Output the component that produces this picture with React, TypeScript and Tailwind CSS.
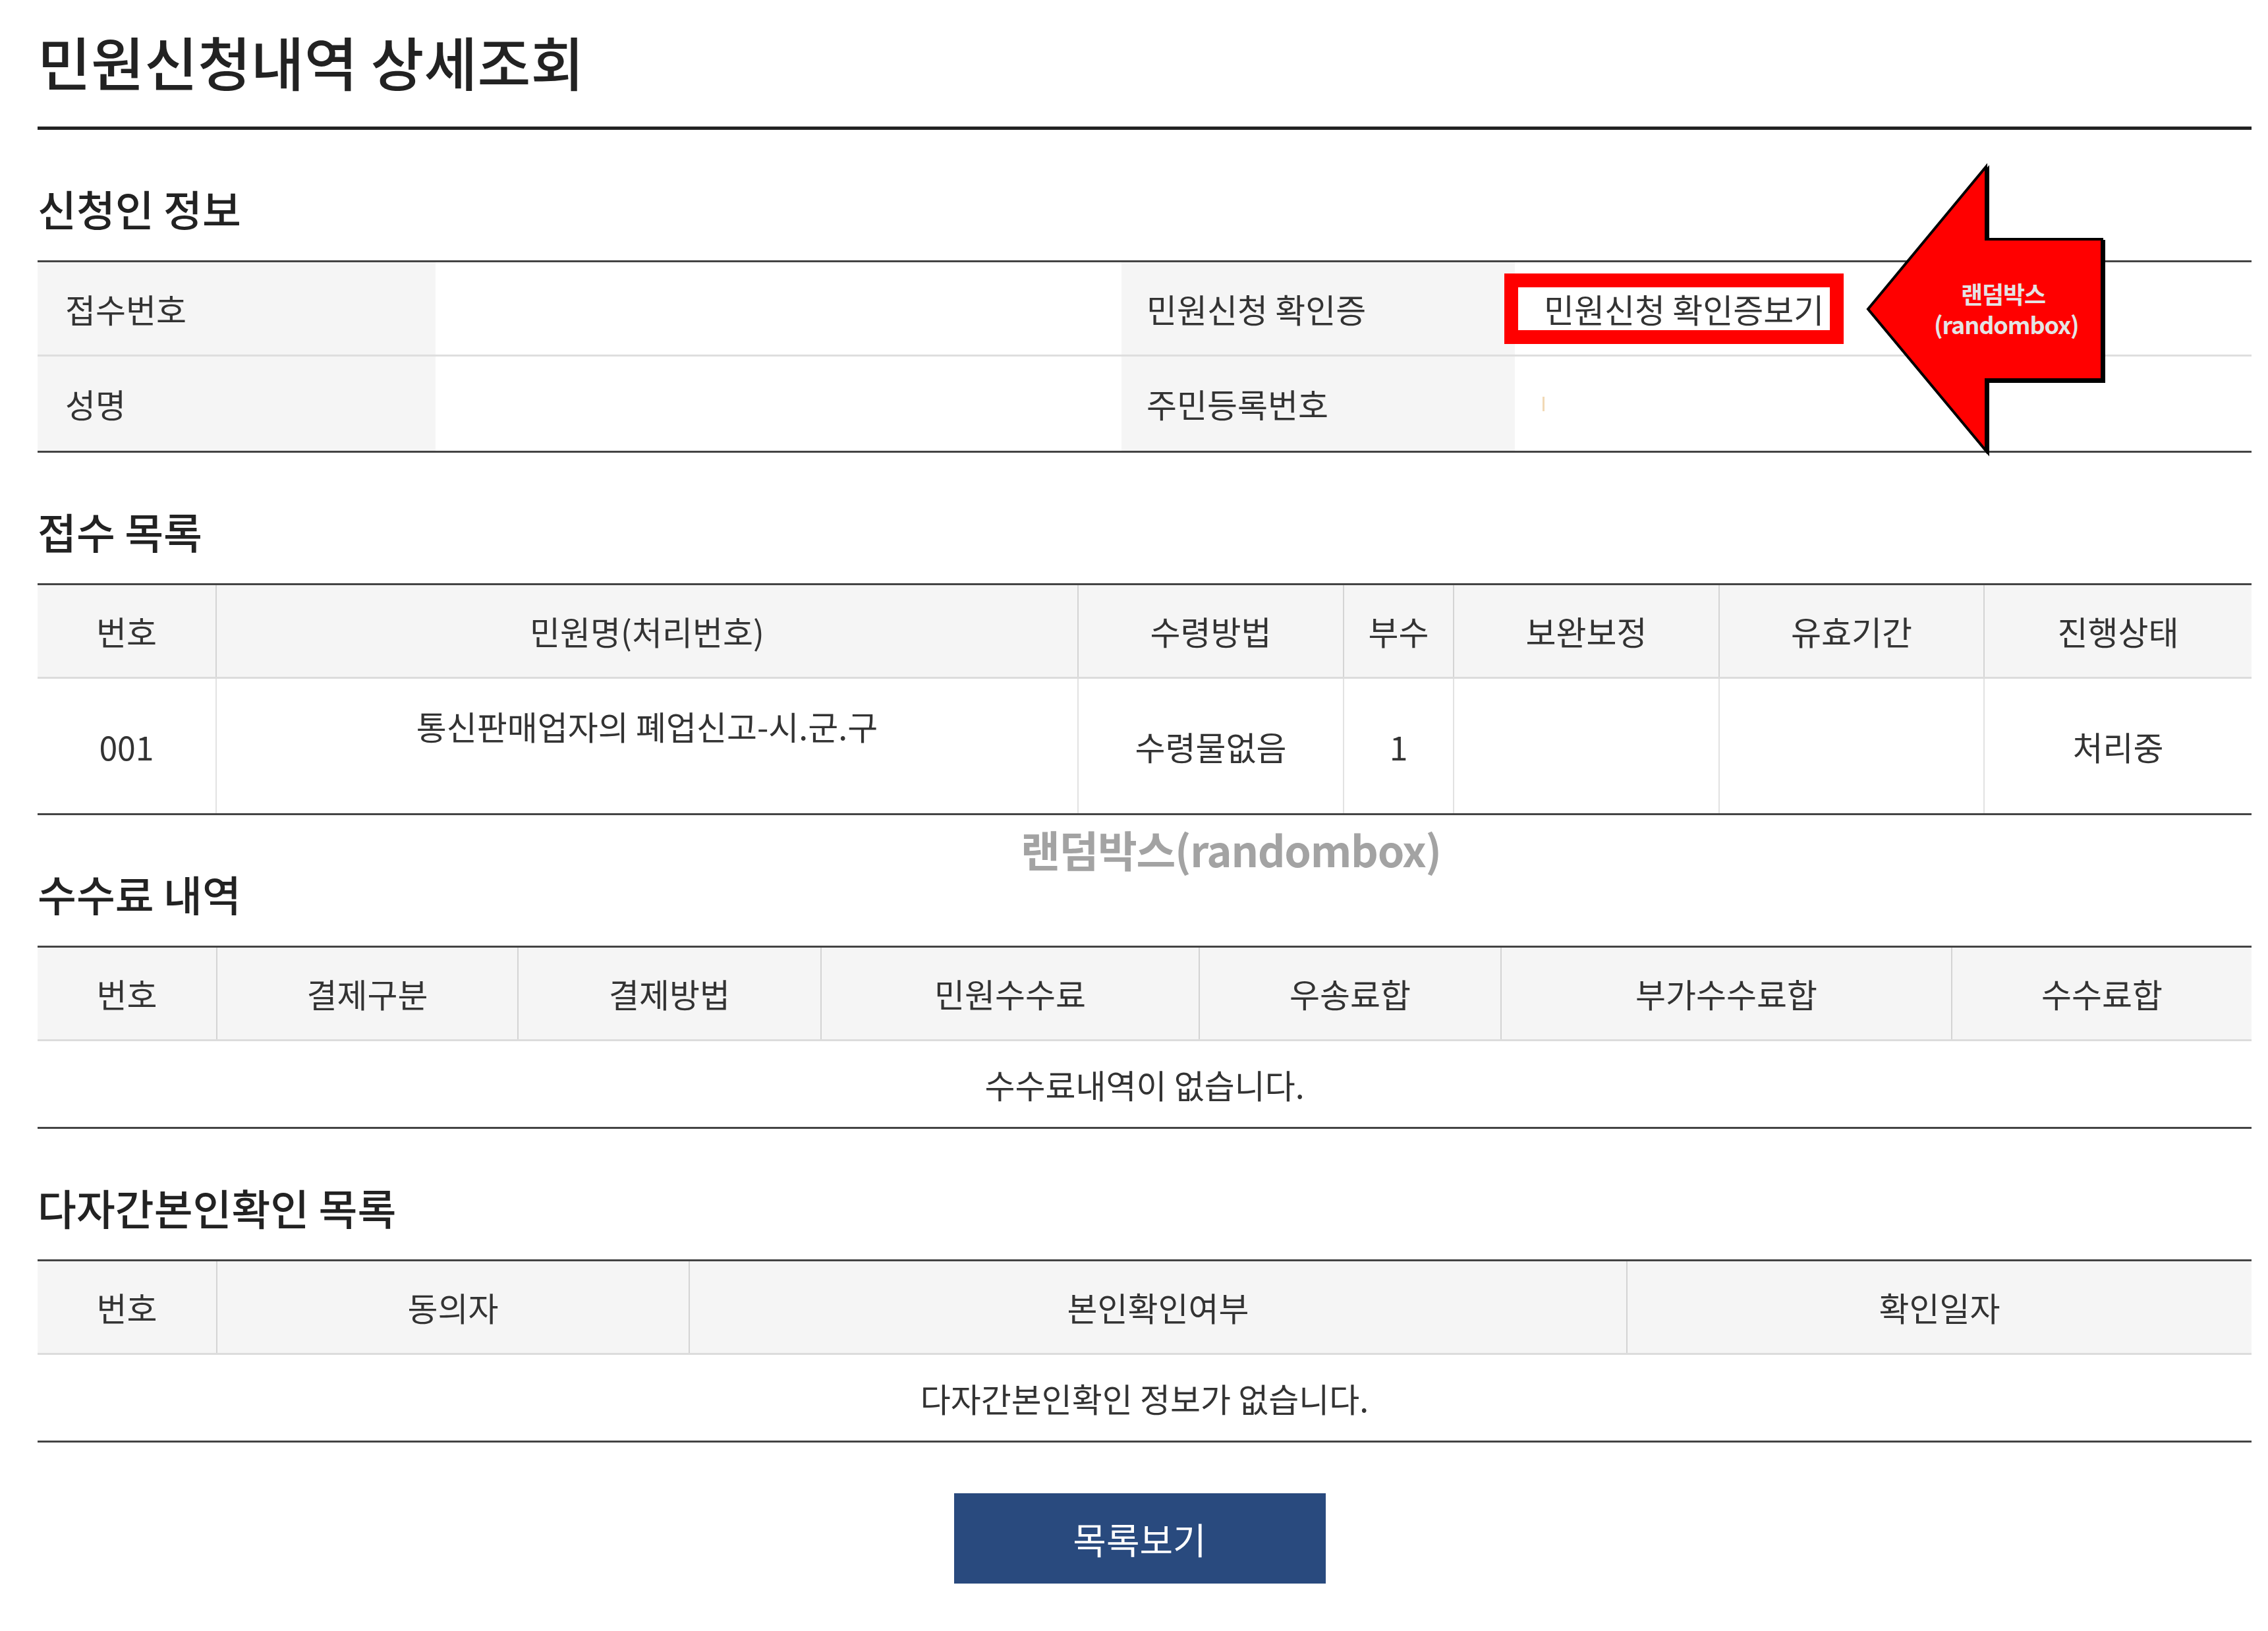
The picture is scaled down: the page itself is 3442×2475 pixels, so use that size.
import React from "react";

const receiptCols = "grid-cols-[270px_1308px_403px_167px_403px_402px_407px]";
const feeCols = "grid-cols-[271px_457px_460px_574px_458px_684px_456px]";
const verifyCols = "grid-cols-[271px_717px_1423px_949px]";

function SectionTitle({ children }: { children: React.ReactNode }) {
  return (
    <h2 className="mt-[78px] mb-[40px] text-[64px] leading-[80px] font-medium text-[#222]">
      {children}
    </h2>
  );
}

function HeadRow({ cols, labels }: { cols: string; labels: string[] }) {
  return (
    <div className={`grid ${cols} h-[142px] border-b-[3px] border-[#dcdcdc] bg-[#f5f5f5]`}>
      {labels.map((label, i) => (
        <div
          key={label + i}
          className={
            i > 0
              ? "flex items-center justify-center border-l-2 border-[#d4d4d4]"
              : "flex items-center justify-center"
          }
        >
          {label}
        </div>
      ))}
    </div>
  );
}

function EmptyRow({ text }: { text: string }) {
  return <div className="flex h-[130px] items-center justify-center">{text}</div>;
}

export default function App() {
  return (
    <div className="relative min-h-[2475px] bg-white pl-[57px] pr-[25px] pb-[70px] font-['Noto_Sans_CJK_KR','Noto_Sans',sans-serif] text-[50px] text-[#333]">
      {/* Page title */}
      <h1 className="border-b-[5px] border-[#222] pt-[42px] pb-[50px] text-[88px] leading-[100px] font-medium text-[#222]">
        민원신청내역 상세조회
      </h1>

      {/* 신청인 정보 */}
      <SectionTitle>신청인 정보</SectionTitle>
      <div className="border-y-[3px] border-[#444]">
        <div className="grid h-[143px] grid-cols-[604px_1041px_597px_1118px] border-b-[3px] border-[#dedede]">
          <div className="flex items-center bg-[#f5f5f5] pl-[42px]">접수번호</div>
          <div />
          <div className="flex items-center bg-[#f5f5f5] pl-[38px]">민원신청 확인증</div>
          <div className="flex items-center">
            <a
              href="#"
              className="-ml-4 box-content flex h-[65px] items-center border-[21px] border-[#ff0000] bg-white pl-[39px] pr-[9px] text-[#333]"
            >
              민원신청 확인증보기
            </a>
          </div>
        </div>
        <div className="grid h-[143px] grid-cols-[604px_1041px_597px_1118px]">
          <div className="flex items-center bg-[#f5f5f5] pl-[42px]">성명</div>
          <div />
          <div className="flex items-center bg-[#f5f5f5] pl-[38px]">주민등록번호</div>
          <div className="flex items-center pl-[42px]">
            <span className="h-[22px] w-[3px] bg-[#f1d9b5]" />
          </div>
        </div>
      </div>

      {/* 접수 목록 */}
      <SectionTitle>접수 목록</SectionTitle>
      <div className="border-y-[3px] border-[#444]">
        <HeadRow
          cols={receiptCols}
          labels={["번호", "민원명(처리번호)", "수령방법", "부수", "보완보정", "유효기간", "진행상태"]}
        />
        <div className={`grid ${receiptCols} h-[204px]`}>
          <div className="flex items-center justify-center">001</div>
          <div className="flex flex-col items-center justify-center border-l-2 border-[#e2e2e2] leading-[62px]">
            <span>통신판매업자의 폐업신고-시.군.구</span>
            <span>&nbsp;</span>
          </div>
          <div className="flex items-center justify-center border-l-2 border-[#e2e2e2]">수령물없음</div>
          <div className="flex items-center justify-center border-l-2 border-[#e2e2e2]">1</div>
          <div className="border-l-2 border-[#e2e2e2]" />
          <div className="border-l-2 border-[#e2e2e2]" />
          <div className="flex items-center justify-center border-l-2 border-[#e2e2e2]">처리중</div>
        </div>
      </div>

      {/* 수수료 내역 */}
      <SectionTitle>수수료 내역</SectionTitle>
      <div className="border-y-[3px] border-[#444]">
        <HeadRow
          cols={feeCols}
          labels={["번호", "결제구분", "결제방법", "민원수수료", "우송료합", "부가수수료합", "수수료합"]}
        />
        <EmptyRow text="수수료내역이 없습니다." />
      </div>

      {/* 다자간본인확인 목록 */}
      <SectionTitle>다자간본인확인 목록</SectionTitle>
      <div className="border-y-[3px] border-[#444]">
        <HeadRow cols={verifyCols} labels={["번호", "동의자", "본인확인여부", "확인일자"]} />
        <EmptyRow text="다자간본인확인 정보가 없습니다." />
      </div>

      <div className="mt-[77px] flex justify-center pr-[15px]">
        <button className="h-[137px] w-[564px] bg-[#294a7e] text-[55px] text-white">
          목록보기
        </button>
      </div>

      {/* watermark */}
      <div className="absolute left-[1549px] top-[1248px] text-[65px] leading-[80px] font-bold tracking-[-0.02em] text-[#a3a3a3]">
        랜덤박스(randombox)
      </div>

      {/* arrow annotation */}
      <div className="absolute left-[2825px] top-[243px] h-[455px] w-[380px]">
        <svg width="380" height="455" viewBox="0 0 380 455">
          <polygon
            points="13,229 192,13 192,123 368,123 368,336 192,336 192,444"
            fill="#000"
            stroke="#000"
            strokeWidth="4"
          />
          <polygon
            points="10,226 189,10 189,120 365,120 365,333 189,333 189,441"
            fill="#ff0000"
            stroke="#000"
            strokeWidth="4"
          />
        </svg>
        <div className="absolute left-[110px] top-[179px] w-[210px] text-center text-[36px] leading-[46px] font-bold tracking-[-0.03em] text-[#e4e4e4]">
          <div>랜덤박스</div>
          <div>(randombox)</div>
        </div>
      </div>
    </div>
  );
}
